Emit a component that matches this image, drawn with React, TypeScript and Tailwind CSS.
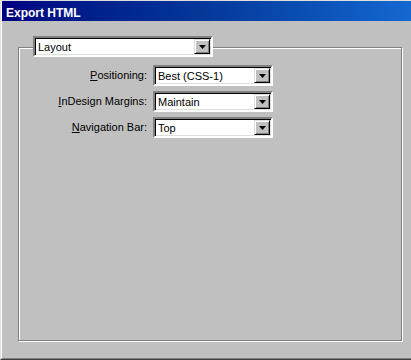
import React from 'react';

const font = { fontFamily: '"Liberation Sans", Arial, sans-serif' };

const Arrow = () => (
  <svg width="7" height="4" viewBox="0 0 7 4" className="block">
    <polygon points="0,0 7,0 3.5,4" fill="#000" />
  </svg>
);

// sunken white combo box with the little raised button on the right
const Combo: React.FC<{ value: string; width: string }> = ({ value, width }) => (
  <div
    className={`${width} h-[21px] flex bg-white border-2 border-t-[#808080] border-l-[#808080] border-b-white border-r-white shadow-[inset_1px_1px_0_#000,inset_-1px_-1px_0_#dfdfdf]`}
  >
    <div className="flex-1 flex items-center pl-[3px] pt-[1px] text-[11px] leading-[13px] text-black">{value}</div>
    <div className="w-[16px] my-[1px] mr-[1px] flex items-center justify-center bg-[#c0c0c0] border border-t-[#dfdfdf] border-l-[#dfdfdf] border-r-black border-b-black shadow-[inset_1px_1px_0_#fff,inset_-1px_-1px_0_#808080]">
      <Arrow />
    </div>
  </div>
);

const rows = [
  { key: 'P', rest: 'ositioning:', value: 'Best (CSS-1)' },
  { key: 'I', rest: 'nDesign Margins:', value: 'Maintain' },
  { key: 'N', rest: 'avigation Bar:', value: 'Top' },
];

export default function App() {
  return (
    <div style={font} className="w-[411px] h-[360px] bg-[#c0c0c0] border-l border-t border-[#dfdfdf] border-b border-b-[#404040] overflow-hidden">
      <div className="h-full flex flex-col border-l border-l-white border-b border-b-[#808080]">
        {/* title bar */}
        <div className="h-[20px] bg-gradient-to-r from-[#000080] via-[#06389a] to-[#1468d0] pl-[4px] pt-[5px]">
          <span className="block text-[12px] leading-[14px] font-bold text-white">Export HTML</span>
        </div>

        {/* group box */}
        <div className="ml-[16px] mt-[26px] w-[384px] h-[294px] relative border border-[#808080] shadow-[inset_1px_1px_0_#fff,1px_1px_0_#fff]">
          <div className="absolute left-[14px] top-[-12px]">
            <Combo value="Layout" width="w-[180px]" />
          </div>

          <div className="pt-[17px] flex flex-col gap-[5px]">
            {rows.map((r) => (
              <div key={r.key} className="flex items-center h-[21px]">
                <div className="w-[128px] text-right text-[11px] leading-[13px] text-black">
                  <span className="underline underline-offset-[1px]">{r.key}</span>
                  {r.rest}
                </div>
                <div className="ml-[6px]">
                  <Combo value={r.value} width="w-[120px]" />
                </div>
              </div>
            ))}
          </div>
        </div>
      </div>
    </div>
  );
}
